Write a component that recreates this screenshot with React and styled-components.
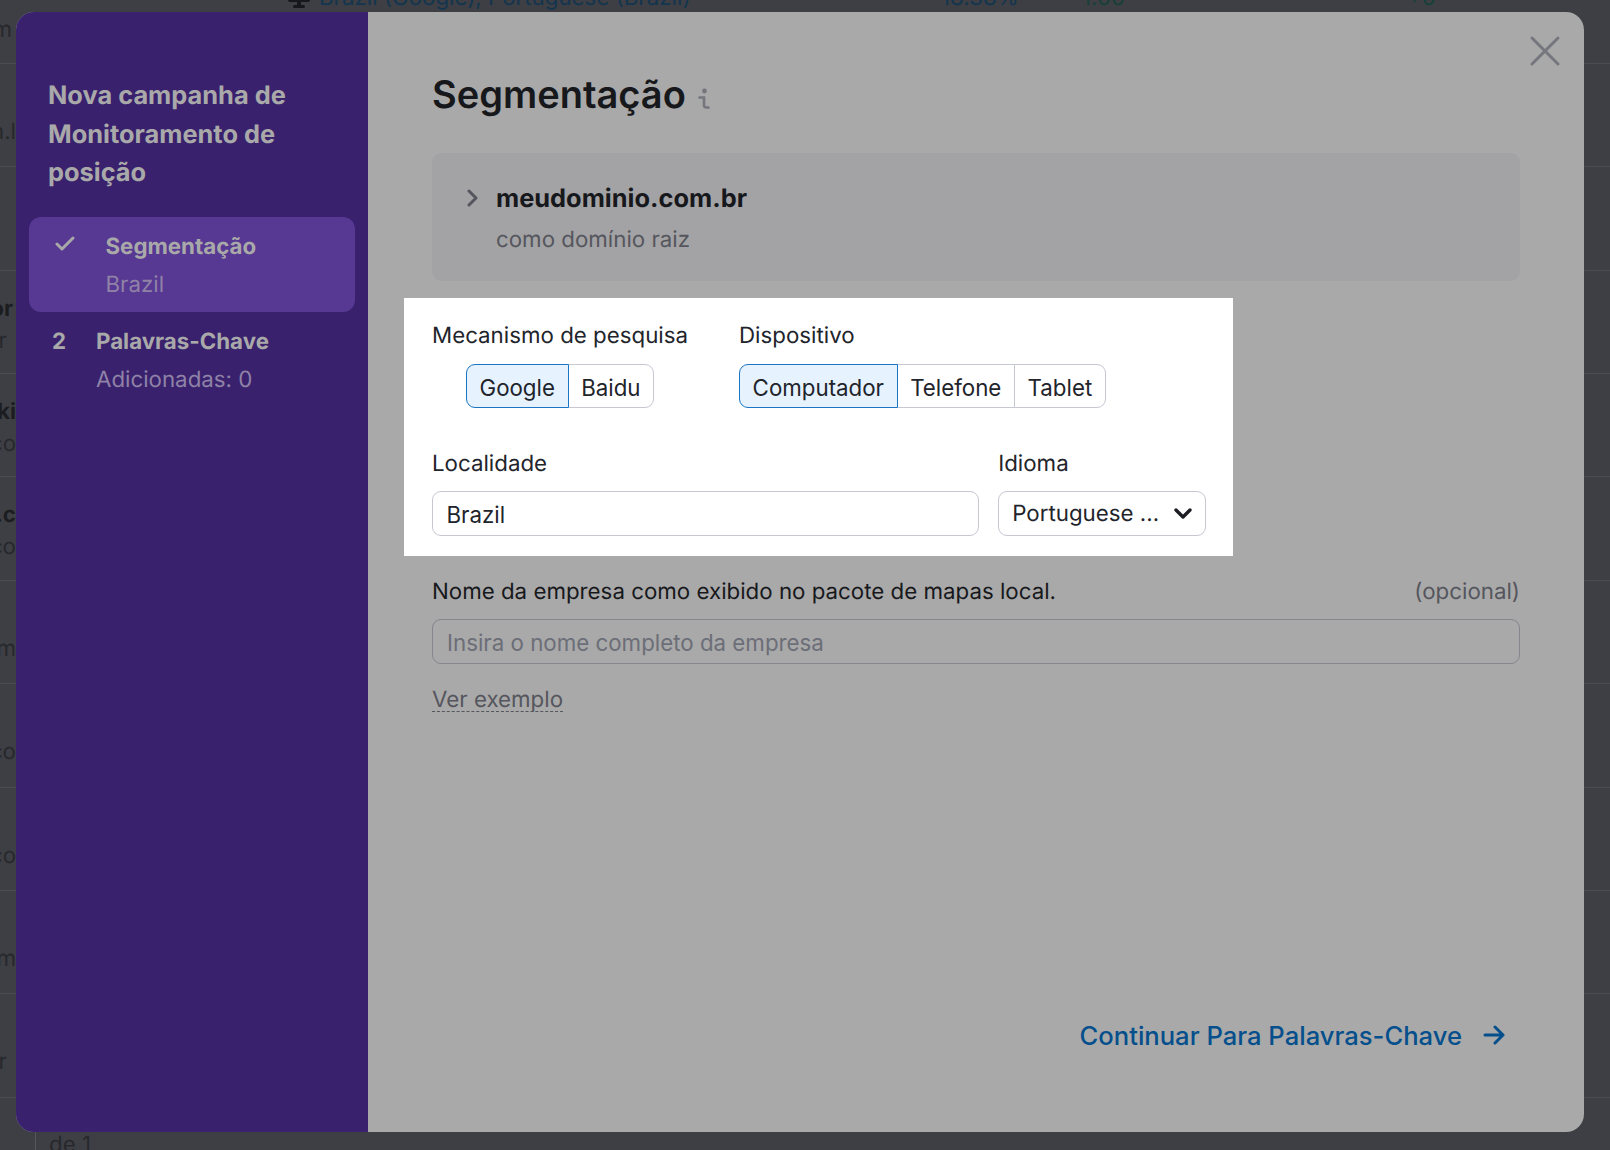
import React from "react";
import styled, { createGlobalStyle } from "styled-components";

const Global = createGlobalStyle`
  html, body { margin: 0; padding: 0; background: #3e3f44; }
  body {
    font-family: Inter, "Liberation Sans", sans-serif;
    font-size: 22.3px;
    overflow: hidden;
    text-rendering: geometricPrecision;
  }
  * { box-sizing: border-box; }
`;

const Page = styled.div`
  position: relative;
  width: 1610px;
  height: 1150px;
  overflow: hidden;
  background: #3e3f44;
`;

const Table = styled.div`
  margin-top: -39.6px;
`;

const Row = styled.div`
  height: 103.4px;
  border-bottom: 1px solid #4b4c50;
  display: grid;
  grid-template-columns: 288px 653px 141px 325px 1fr;
  padding-top: 22px;
  line-height: 32px;
`;

const DomainCell = styled.div`
  width: 16px;
  display: flex;
  flex-direction: column;
  align-items: flex-end;
  white-space: nowrap;
`;

const RowTitle = styled.div`
  min-height: 32px;
  padding-right: ${p => p.$end}px;
  font-weight: 700;
  color: #1c1d20;
  &:empty { min-height: 30px; }
`;

const RowSub = styled.div`
  min-height: 32px;
  padding-right: ${p => p.$end}px;
  color: #27282c;
`;

const LocationCell = styled.div`
  display: flex;
  align-items: center;
  align-self: start;
  gap: 9px;
  height: 32px;
  color: #13354f;
  white-space: nowrap;
`;

const NumberCell = styled.div`
  color: ${p => p.$tone};
  white-space: nowrap;
`;

const Pager = styled.div`
  margin-left: 35px;
  padding: 32px 0 0 13px;
  border-left: 1px solid #55565a;
  height: 60px;
  line-height: 30px;
  color: #27282c;
`;

const Modal = styled.div`
  position: absolute;
  left: 16px;
  top: 12px;
  width: 1568px;
  height: 1120px;
  border-radius: 18px;
  overflow: hidden;
  display: grid;
  grid-template-columns: 352px 1fr;
  background: #a9a9a9;
`;

const Sidebar = styled.aside`
  background: #39216e;
  padding-top: 65px;
`;

const SideTitle = styled.h2`
  margin: 0 0 24.5px;
  padding: 0 32px;
  font-size: 25.4px;
  font-weight: 700;
  line-height: 38.5px;
  color: #a9a9a9;
`;

const Step = styled.div`
  margin: 0 13px;
  padding: 11px 0 8px ${p => (p.$active ? 26 : 23)}px;
  border-radius: 12px;
  display: grid;
  grid-template-columns: ${p => (p.$active ? 50.5 : 44)}px 1fr;
  background: ${p => (p.$active ? "#573892" : "transparent")};
`;

const StepMark = styled.div`
  height: 38px;
  padding-top: ${p => p.$top}px;
  font-weight: 700;
  line-height: 38px;
  color: #a9a9a9;
  display: flex;
  align-items: flex-start;
`;

const StepName = styled.div`
  font-weight: 700;
  line-height: 38px;
  color: #a9a9a9;
`;

const StepInfo = styled.div`
  line-height: 38px;
  color: #8f82a6;
`;

const Main = styled.main`
  position: relative;
  padding: 54px 64px 0;
  display: flex;
  flex-direction: column;
  min-width: 0;
`;

const CloseButton = styled.button`
  position: absolute;
  top: 22.5px;
  right: 22.7px;
  width: 32px;
  height: 32px;
  padding: 0;
  border: 0;
  background: none;
  display: flex;
`;

const Heading = styled.h1`
  margin: 0;
  height: 56px;
  padding-top: 2px;
  display: flex;
  align-items: center;
  gap: 12px;
  font-size: 38px;
  font-weight: 600;
  line-height: 54px;
  color: #17181c;
`;

const DomainCard = styled.section`
  margin-top: 31px;
  height: 128px;
  padding: 27px 0 0 35px;
  border-radius: 9px;
  background: #a3a3a5;
  display: grid;
  grid-template-columns: 29px 1fr;
`;

const ChevronBox = styled.div`
  height: 38px;
  margin-top: -1px;
  display: flex;
  align-items: center;
`;

const DomainName = styled.div`
  font-size: 25.4px;
  font-weight: 700;
  line-height: 38px;
  color: #17181c;
`;

const DomainKind = styled.div`
  margin-top: 3px;
  line-height: 38px;
  color: #55565d;
`;

const Spotlight = styled.section`
  margin: 17px 0 0 -28px;
  width: 829px;
  height: 258px;
  padding: 23px 28px 0;
  background: #fff;
`;

const TopFields = styled.div`
  display: flex;
  gap: 51px;
`;

const Field = styled.div`
  display: flex;
  flex-direction: column;
  min-width: 0;
`;

const Label = styled.label`
  display: block;
  height: 28px;
  line-height: 30px;
  color: ${p => (p.$dim ? "#17181c" : "#22242b")};
`;

const Segments = styled.div`
  margin-top: 15px;
  align-self: ${p => p.$align};
  display: flex;
`;

const Segment = styled.button`
  position: relative;
  z-index: ${p => (p.$on ? 1 : 0)};
  height: 44px;
  margin-left: -1px;
  padding: 3px 12.6px 0;
  font: inherit;
  line-height: 39px;
  color: #22242b;
  background: ${p => (p.$on ? "#e6f3ff" : "#fff")};
  border: 1px solid ${p => (p.$on ? "#1a75c4" : "#c6c8d2")};
  &:first-child { margin-left: 0; border-radius: 9px 0 0 9px; }
  &:last-child { border-radius: 0 9px 9px 0; }
`;

const BottomFields = styled.div`
  margin-top: 41px;
  display: grid;
  grid-template-columns: 546.7px 207.8px;
  column-gap: 19.5px;
`;

const TextInput = styled.input`
  width: 100%;
  height: 45px;
  margin-top: 14px;
  padding: 1px 13.5px 0;
  font: inherit;
  color: #22242b;
  background: #fff;
  border: 1px solid #c6c8d2;
  border-radius: 9px;
  outline: none;
`;

const SelectBox = styled.div`
  height: 45px;
  margin-top: 14px;
  padding: 0 13px;
  display: flex;
  align-items: center;
  justify-content: space-between;
  line-height: 45px;
  color: #22242b;
  border: 1px solid #c6c8d2;
  border-radius: 9px;
`;

const CompanyHead = styled.div`
  margin-top: 21px;
  display: flex;
  justify-content: space-between;
`;

const Optional = styled.span`
  height: 28px;
  line-height: 30px;
  color: #55565d;
`;

const CompanyInput = styled.input`
  width: 100%;
  height: 45px;
  margin-top: 14px;
  padding: 1px 14px 0;
  font: inherit;
  background: transparent;
  border: 1px solid #85868c;
  border-radius: 9px;
  outline: none;
  &::placeholder { color: #6c6e78; opacity: 1; }
`;

const ExampleLink = styled.a`
  align-self: flex-start;
  margin-top: 24.5px;
  line-height: 22.5px;
  color: #55565d;
  border-bottom: 1px dashed #55565d;
`;

const Footer = styled.footer`
  margin-top: auto;
  padding: 0 15.5px 75px 0;
  display: flex;
  justify-content: flex-end;
`;

const NextButton = styled.button`
  height: 44px;
  padding: 0;
  display: flex;
  align-items: center;
  gap: 20.5px;
  font: inherit;
  font-size: 25.6px;
  font-weight: 500;
  color: #044f8c;
  background: none;
  border: 0;
`;

const Line = ({ w, h, d, color, sw }) => (
  <svg width={w} height={h} viewBox={`0 0 ${w} ${h}`} fill="none" stroke={color} strokeWidth={sw} strokeLinecap="round" strokeLinejoin="round">
    <path d={d} />
  </svg>
);

const rows = [
  ["\u00a0", 0, "exemplo.com", 4],
  ["", 0, "dominio.n.l", 0],
  ["", 0, "", 0],
  ["vendor", 3, "server", 9],
  ["kiki", 0, "site.co", 0],
  ["loja.c", 0, "loja.co", 0],
  ["", 0, "site.com", 0],
  ["", 0, "loja.co", 0],
  ["", 0, "site.co", 0],
  ["", 0, "loja.com", 0],
  ["", 0, "server", 9],
];

export default function App() {
  return (
    <Page>
      <Global />
      <Table>
        {rows.map(([title, titleEnd, sub, subEnd], i) => (
          <Row key={i}>
            <DomainCell>
              <RowTitle $end={titleEnd}>{title}</RowTitle>
              <RowSub $end={subEnd}>{sub}</RowSub>
            </DomainCell>
            {i === 0 && (
              <>
                <LocationCell>
                  <svg width="22" height="22" viewBox="0 0 22 22" fill="#17181c">
                    <rect x="0" y="0" width="22" height="15" rx="2" />
                    <rect x="9" y="15" width="4" height="3" />
                    <rect x="5" y="18" width="12" height="3" rx="1.5" />
                  </svg>
                  Brazil (Google), Portuguese (Brazil)
                </LocationCell>
                <NumberCell $tone="#13354f">18.38%</NumberCell>
                <NumberCell $tone="#174038">1.00</NumberCell>
                <NumberCell $tone="#174038">+0</NumberCell>
              </>
            )}
          </Row>
        ))}
      </Table>
      <Pager>de 1</Pager>

      <Modal>
        <Sidebar>
          <SideTitle>Nova campanha de Monitoramento de posição</SideTitle>
          <Step $active>
            <StepMark $top={8}>
              <Line w={20} h={16} d="M2 8 L7 13 L18 2" color="#a9a9a9" sw={3} />
            </StepMark>
            <div>
              <StepName>Segmentação</StepName>
              <StepInfo>Brazil</StepInfo>
            </div>
          </Step>
          <Step>
            <StepMark $top={0}>2</StepMark>
            <div>
              <StepName>Palavras-Chave</StepName>
              <StepInfo>Adicionadas: 0</StepInfo>
            </div>
          </Step>
        </Sidebar>

        <Main>
          <CloseButton aria-label="Fechar">
            <Line w={32} h={32} d="M3 3 L29 29 M29 3 L3 29" color="#75767e" sw={3} />
          </CloseButton>
          <Heading>
            Segmentação
            <svg width="12" height="22" viewBox="0 0 12 22" fill="none" style={{ marginTop: 8 }}>
              <circle cx="6.5" cy="3" r="2.4" fill="#74757d" />
              <path d="M1.5 9.5 H6 V17 Q6 19.5 8.5 19.5 H10.5" stroke="#74757d" strokeWidth="2.6" strokeLinecap="round" />
            </svg>
          </Heading>

          <DomainCard>
            <ChevronBox>
              <Line w={12} h={18} d="M2 2 L9 9 L2 16" color="#55565d" sw={3} />
            </ChevronBox>
            <div>
              <DomainName>meudominio.com.br</DomainName>
              <DomainKind>como domínio raiz</DomainKind>
            </div>
          </DomainCard>

          <Spotlight>
            <TopFields>
              <Field>
                <Label>Mecanismo de pesquisa</Label>
                <Segments $align="center">
                  <Segment $on>Google</Segment>
                  <Segment>Baidu</Segment>
                </Segments>
              </Field>
              <Field>
                <Label>Dispositivo</Label>
                <Segments $align="flex-start">
                  <Segment $on>Computador</Segment>
                  <Segment>Telefone</Segment>
                  <Segment>Tablet</Segment>
                </Segments>
              </Field>
            </TopFields>
            <BottomFields>
              <Field>
                <Label>Localidade</Label>
                <TextInput readOnly value="Brazil" />
              </Field>
              <Field>
                <Label>Idioma</Label>
                <SelectBox>
                  Portuguese ...
                  <Line w={18} h={12} d="M2 2 L9 9 L16 2" color="#1e1f24" sw={3.4} />
                </SelectBox>
              </Field>
            </BottomFields>
          </Spotlight>

          <CompanyHead>
            <Label $dim>Nome da empresa como exibido no pacote de mapas local.</Label>
            <Optional>(opcional)</Optional>
          </CompanyHead>
          <CompanyInput readOnly placeholder="Insira o nome completo da empresa" />
          <ExampleLink>Ver exemplo</ExampleLink>

          <Footer>
            <NextButton>
              Continuar Para Palavras-Chave
              <Line w={22} h={20} d="M2 10 H20 M12 2 L20 10 L12 18" color="#044f8c" sw={3} />
            </NextButton>
          </Footer>
        </Main>
      </Modal>
    </Page>
  );
}
